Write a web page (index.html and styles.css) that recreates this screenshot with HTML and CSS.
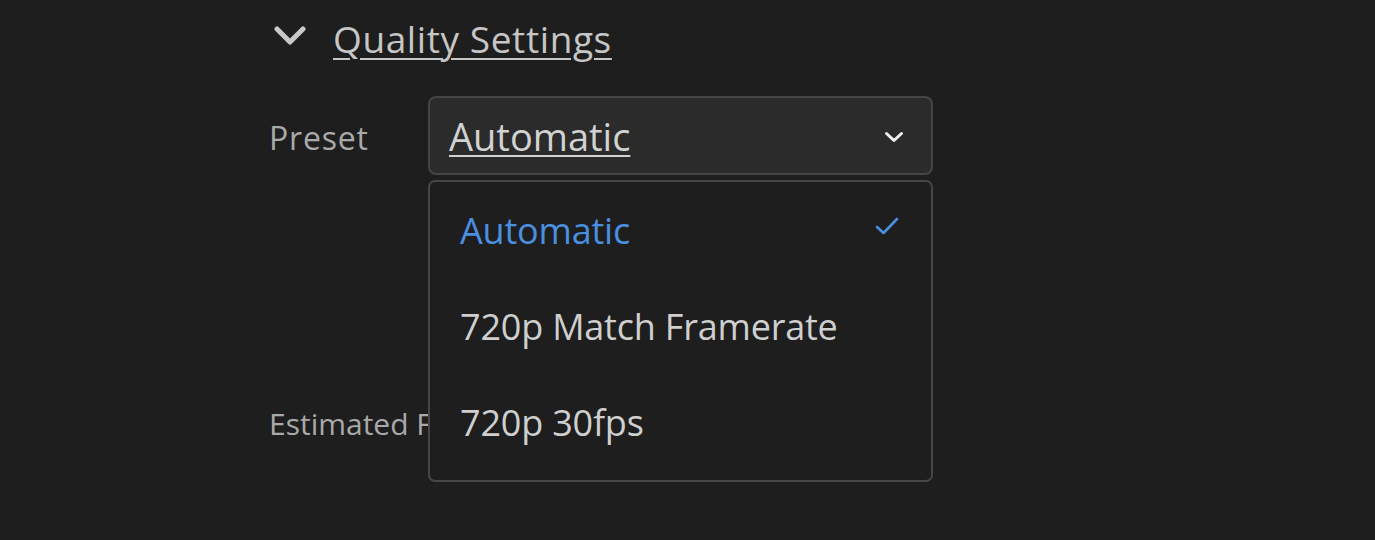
FILE: index.html
```html
<!DOCTYPE html>
<html>
<head>
<meta charset="utf-8">
<link rel="stylesheet" href="styles.css">
</head>
<body>
<div class="panel">
  <div class="section-head">
    <svg class="head-chevron" width="32" height="20" viewBox="0 0 32 20"><path d="M3 3 L16 16 L29 3" fill="none" stroke="#c9c9c9" stroke-width="5" stroke-linecap="round" stroke-linejoin="round"/></svg>
    <span class="head-title">Quality Settings</span>
  </div>
  <div class="row preset-row">
    <div class="label">Preset</div>
    <div class="picker">
      <div class="picker-btn">
        <span class="picker-value">Automatic</span>
        <svg class="picker-chevron" width="20" height="12" viewBox="0 0 20 12"><path d="M2.5 2.5 L10 9.5 L17.5 2.5" fill="none" stroke="#f0f0f0" stroke-width="3" stroke-linecap="round" stroke-linejoin="round"/></svg>
      </div>
      <div class="menu">
        <div class="menu-item selected"><span>Automatic</span>
          <svg class="check" width="24" height="20" viewBox="0 0 24 20"><path d="M2 11 L8.5 17 L22 3" fill="none" stroke="#4a8fe0" stroke-width="2.6" stroke-linecap="round" stroke-linejoin="round"/></svg>
        </div>
        <div class="menu-item"><span>720p Match Framerate</span></div>
        <div class="menu-item"><span>720p 30fps</span></div>
      </div>
    </div>
  </div>
  <div class="row est-row">
    <div class="label small">Estimated File Size</div>
  </div>
</div>
</body>
</html>
```
FILE: styles.css
```css
html, body {
  margin: 0;
  padding: 0;
  background: #1e1e1e;
}
body {
  font-family: "Open Sans", "Noto Sans", sans-serif;
  width: 1375px;
  height: 540px;
  overflow: hidden;
}
.panel {
  padding-left: 269px;
  padding-top: 12px;
}
.section-head {
  display: flex;
  align-items: center;
  height: 52px;
}
.head-chevron {
  margin-left: 5px;
  margin-right: 27px;
  margin-top: -4px;
}
.head-title {
  font-size: 37px;
  color: #c6c6c6;
  text-decoration: underline;
  text-decoration-thickness: 2px;
  text-underline-offset: 5px;
  letter-spacing: 0.6px;
}
.row {
  display: flex;
  align-items: center;
}
.preset-row {
  margin-top: 32px;
}
.label {
  width: 159px;
  font-size: 32px;
  color: #a9a9a9;
  letter-spacing: 0.8px;
  padding-top: 4px;
}
.label.small {
  font-size: 30px;
  letter-spacing: 0;
  white-space: nowrap;
  padding-top: 0;
}
.picker {
  position: relative;
}
.picker-btn {
  box-sizing: border-box;
  width: 505px;
  height: 79px;
  background: #2b2b2b;
  border: 2px solid #444444;
  border-radius: 8px;
  display: flex;
  align-items: center;
  justify-content: space-between;
  padding: 0 27px 0 19px;
}
.picker-value {
  font-size: 38px;
  color: #d2d2d2;
  text-decoration: underline;
  text-decoration-thickness: 2px;
  text-underline-offset: 4px;
}
.picker-chevron {
  margin-top: 2px;
}
.menu {
  position: absolute;
  left: 0;
  top: 84px;
  z-index: 2;
  box-sizing: border-box;
  width: 505px;
  height: 302px;
  background: #1e1e1e;
  border: 2px solid #464646;
  border-radius: 7px;
  padding: 0;
}
.menu-item {
  height: 96px;
  display: flex;
  align-items: center;
  justify-content: space-between;
  padding: 0 32px 0 30px;
  font-size: 36px;
  color: #cfcfcf;
  letter-spacing: -0.2px;
}
.menu-item.selected {
  color: #4a8fe0;
}
.check {
  margin-top: -8px;
}
.est-row {
  margin-top: 228px;
}
```
